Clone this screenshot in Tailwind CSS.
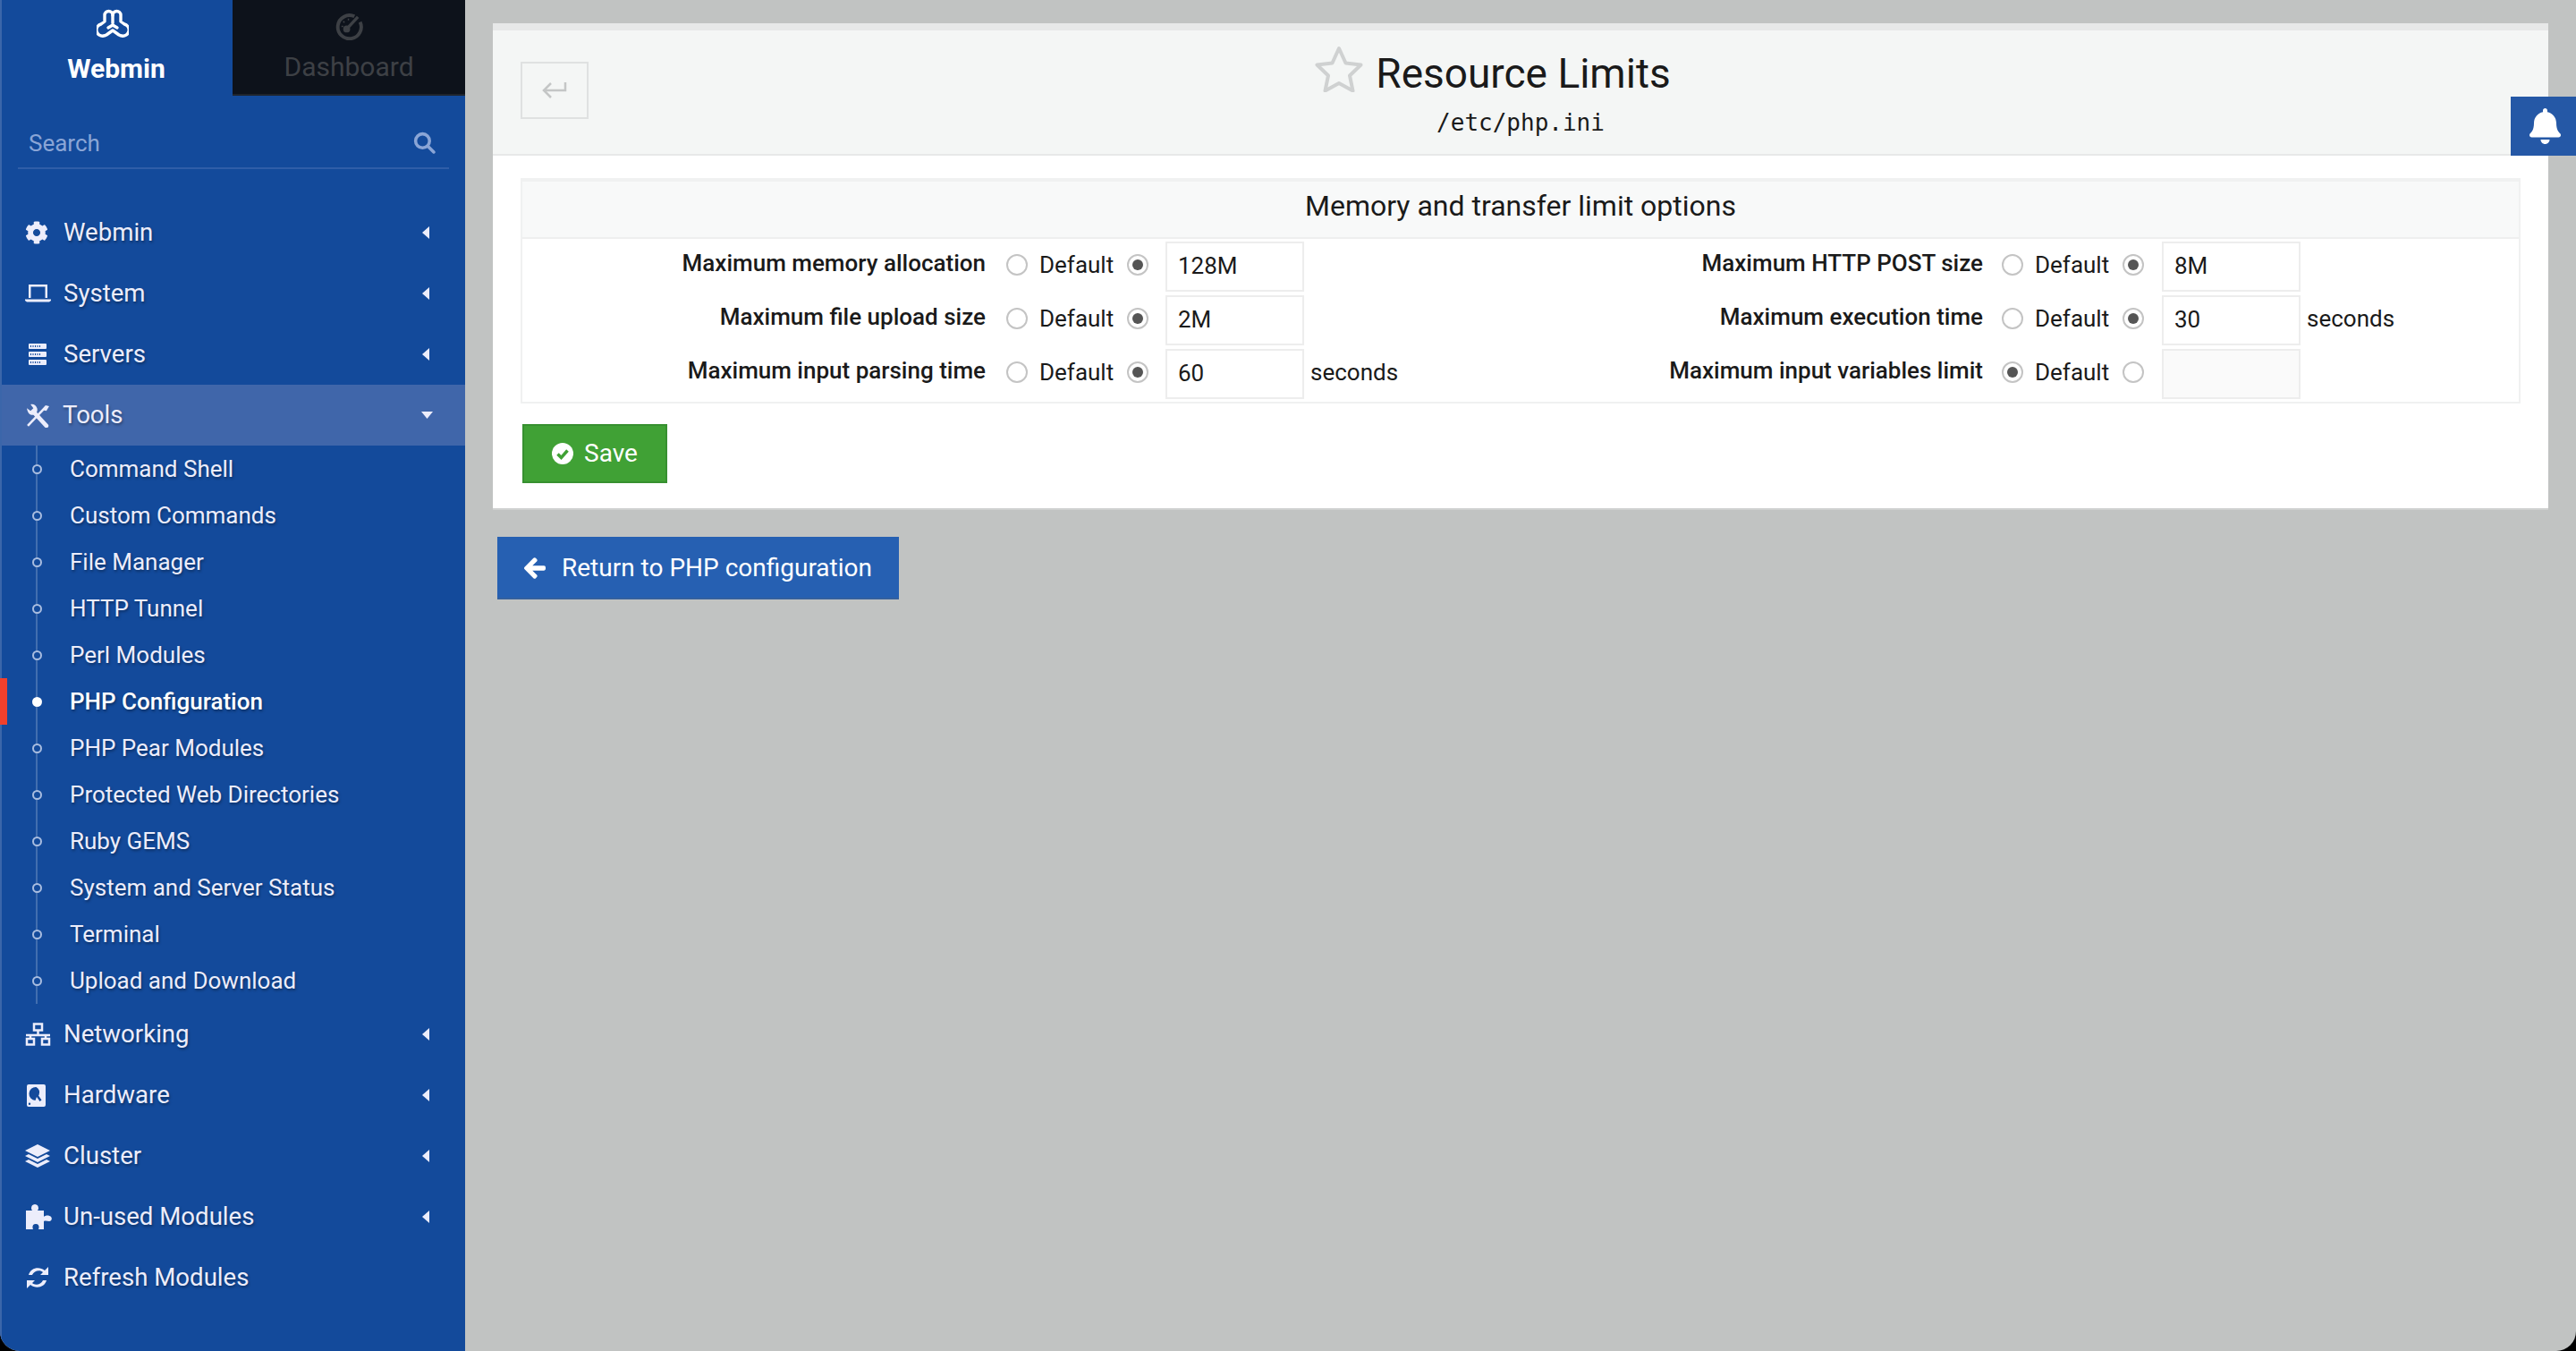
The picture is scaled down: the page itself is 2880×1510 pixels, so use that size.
<!DOCTYPE html>
<html>
<head>
<meta charset="utf-8">
<title>Resource Limits</title>
<script src="https://cdn.jsdelivr.net/npm/@tailwindcss/browser@4"></script>
</head>
<body class="bg-black m-0">
<div class="w-[2880px] h-[1510px] flex overflow-hidden rounded-b-[22px] bg-[#c1c3c2] font-['Roboto',sans-serif] relative">

  <!-- Sidebar -->
  <aside class="w-[520px] h-full shrink-0 flex flex-col bg-[#134a9b] border-l-2 border-[#3b66aa] relative">
    <div class="flex h-[107px] -ml-[2px]">
      <div class="w-[260px] flex flex-col items-center text-white">
        <svg class="mt-[10px] -ml-[9px]" width="36" height="34" viewBox="0 0 36 32" fill="none" stroke="#fff" stroke-width="3.4" stroke-linejoin="round" stroke-linecap="round"><path d="M9 13V6a4.500 4.500 0 0 1 9 0 4.500 4.500 0 0 1 9 0v7l4 3a6.500 6.500 0 0 1-3 13c-1 0-2-.5-3-1l-7-5-7 5c-1 .5-2 1-3 1a6.500 6.500 0 0 1-3-13z"/><path d="M18 6v9M13 20l5-3 5 3"/></svg>
        <span class="mt-[15px] text-[30px] leading-[36px] font-bold">Webmin</span>
      </div>
      <div class="w-[260px] flex flex-col items-center bg-[#0d121b] border-b-2 border-[#1f242c] text-[#3d4045]">
        <svg class="mt-[14px]" width="31" height="31" viewBox="0 0 32 32" fill="none" stroke="#3d4045"><path d="M22 4.500A13.500 13.500 0 1 0 28.500 11" stroke-width="4"/><path d="M13 19L26 5" stroke-width="3.500"/><circle cx="13" cy="19" r="4" fill="#3d4045" stroke="none"/><path d="M7 16h2M9 10l1.500 1.500M15 7v2" stroke-width="1.500"/></svg>
        <span class="mt-[12px] text-[30px] leading-[36px]">Dashboard</span>
      </div>
    </div>

    <div class="mx-[18px] mt-[30px] h-[52px] border-b-2 border-[#2f5ea8] flex items-center justify-between pl-[12px] pr-[15px] pb-[5px] text-[#8aa5d6]">
      <span class="text-[26px] leading-[30px]">Search</span>
      <svg width="25" height="25" viewBox="0 0 24 24" fill="none" stroke="#8aa5d6" stroke-width="3.400" stroke-linecap="round"><circle cx="10" cy="10" r="7.500"/><path d="M16 16l6 6"/></svg>
    </div>

    <nav class="mt-[36px] text-[#ecedfb] text-[27.6px] [text-shadow:1px_2px_3px_rgba(0,0,0,.35)]">
      <div class="h-[68px] flex items-center pl-[26px] pr-[40px] pt-[1px]">
        <svg class="w-[26px] h-[26px] mr-[17px]" viewBox="0 0 512 512" fill="#ecedfb"><path d="M487.4 315.7l-42.6-24.6c4.3-23.2 4.3-47 0-70.2l42.6-24.6c4.9-2.8 7.1-8.6 5.5-14-11.1-35.6-30-67.8-54.7-94.6-3.8-4.1-10-5.1-14.8-2.3L380.8 110c-17.9-15.4-38.5-27.3-60.8-35.1V25.8c0-5.6-3.9-10.5-9.4-11.7-36.7-8.2-74.3-7.8-109.2 0-5.5 1.2-9.4 6.1-9.4 11.7V75c-22.2 7.9-42.8 19.8-60.8 35.1L88.7 85.5c-4.9-2.8-11-1.9-14.8 2.3-24.7 26.7-43.6 58.9-54.7 94.6-1.7 5.4.6 11.2 5.500 14L67.3 221c-4.3 23.2-4.3 47 0 70.2l-42.6 24.6c-4.9 2.8-7.1 8.6-5.500 14 11.1 35.6 30 67.8 54.7 94.6 3.8 4.1 10 5.1 14.8 2.3l42.6-24.6c17.9 15.4 38.5 27.3 60.8 35.1v49.2c0 5.6 3.9 10.5 9.4 11.7 36.7 8.2 74.3 7.8 109.2 0 5.500-1.2 9.4-6.1 9.4-11.7v-49.2c22.2-7.9 42.8-19.8 60.8-35.1l42.6 24.6c4.9 2.8 11 1.9 14.8-2.3 24.7-26.7 43.6-58.9 54.7-94.6 1.500-5.500-.7-11.3-5.6-14.1zM256 336c-44.1 0-80-35.9-80-80s35.9-80 80-80 80 35.9 80 80-35.9 80-80 80z"/></svg>
        <span class="flex-1">Webmin</span>
        <svg width="8" height="14" viewBox="0 0 8 14" fill="#ecedfb"><path d="M8 0v14L0 7z"/></svg>
      </div>
      <div class="h-[68px] flex items-center pl-[26px] pr-[40px] pt-[1px]">
        <svg class="w-[29px] h-[22px] mr-[14px]" viewBox="0 0 29 22" fill="#ecedfb"><path d="M4 1h21v15h-2.500V3.500H6.500V16H4z"/><path d="M0 17.500h29v1.500l-2 1.500H2L0 19z"/></svg>
        <span class="flex-1">System</span>
        <svg width="8" height="14" viewBox="0 0 8 14" fill="#ecedfb"><path d="M8 0v14L0 7z"/></svg>
      </div>
      <div class="h-[69px] flex items-center pl-[30px] pr-[40px]">
        <svg class="w-[20px] h-[24px] mr-[19px]" viewBox="0 0 20 24" fill="#ecedfb"><path fill-rule="evenodd" d="M1 0h18a1 1 0 0 1 1 1v4a1 1 0 0 1-1 1H1a1 1 0 0 1-1-1V1a1 1 0 0 1 1-1zm1 2v2h1V2zm2.500 0v2h1V2zm2.500 0v2h1V2zm2.500 0v2h1V2zm2.500 0v2h1V2zM1 9h18a1 1 0 0 1 1 1v4a1 1 0 0 1-1 1H1a1 1 0 0 1-1-1v-4a1 1 0 0 1 1-1zm1 2v2h1v-2zm2.500 0v2h1v-2zm2.500 0v2h1v-2zm2.500 0v2h1v-2zm2.500 0v2h1v-2zM1 18h18a1 1 0 0 1 1 1v4a1 1 0 0 1-1 1H1a1 1 0 0 1-1-1v-4a1 1 0 0 1 1-1zm1 2v2h1v-2zm2.500 0v2h1v-2zm2.500 0v2h1v-2zm2.500 0v2h1v-2zm2.500 0v2h1v-2z"/></svg>
        <span class="flex-1">Servers</span>
        <svg width="8" height="14" viewBox="0 0 8 14" fill="#ecedfb"><path d="M8 0v14L0 7z"/></svg>
      </div>
      <div class="h-[68px] flex items-center pl-[27px] pr-[36px] bg-[#4066aa]">
        <svg class="w-[27px] h-[27px] mr-[14px]" viewBox="0 0 26 26" fill="none" stroke="#ecedfb"><path d="M2 24L21 4" stroke-width="2.500"/><path d="M18 7l3-5 4 1-3 5z" fill="#ecedfb" stroke="none"/><path d="M10 11L22 24" stroke-width="4.500" stroke-linecap="round"/><path d="M1 5l4 3 3-3-3-4c3-1 6 1 7 4s-1 6-3 7c-3 1-7 0-8-7z" fill="#ecedfb" stroke="none"/></svg>
        <span class="flex-1">Tools</span>
        <svg width="13" height="8" viewBox="0 0 13 8" fill="#ecedfb"><path d="M0 0h13L6.500 8z"/></svg>
      </div>

      <div class="relative h-[624px] text-[26px] leading-[52px]">
        <div class="absolute left-[38px] top-0 bottom-0 w-[2px] bg-white/20"></div>
        <div class="absolute -left-[2px] top-[260px] w-[8px] h-[52px] bg-[#f0402c]"></div>
        <div class="h-[52px] flex items-center pl-[34px]"><i class="w-[11px] h-[11px] rounded-full border-2 border-[#a9bde0] bg-[#134a9b] mr-[31px] relative"></i>Command Shell</div>
        <div class="h-[52px] flex items-center pl-[34px]"><i class="w-[11px] h-[11px] rounded-full border-2 border-[#a9bde0] bg-[#134a9b] mr-[31px] relative"></i>Custom Commands</div>
        <div class="h-[52px] flex items-center pl-[34px]"><i class="w-[11px] h-[11px] rounded-full border-2 border-[#a9bde0] bg-[#134a9b] mr-[31px] relative"></i>File Manager</div>
        <div class="h-[52px] flex items-center pl-[34px]"><i class="w-[11px] h-[11px] rounded-full border-2 border-[#a9bde0] bg-[#134a9b] mr-[31px] relative"></i>HTTP Tunnel</div>
        <div class="h-[52px] flex items-center pl-[34px]"><i class="w-[11px] h-[11px] rounded-full border-2 border-[#a9bde0] bg-[#134a9b] mr-[31px] relative"></i>Perl Modules</div>
        <div class="h-[52px] flex items-center pl-[34px] font-medium text-white"><i class="w-[11px] h-[11px] rounded-full bg-white mr-[31px] relative"></i>PHP Configuration</div>
        <div class="h-[52px] flex items-center pl-[34px]"><i class="w-[11px] h-[11px] rounded-full border-2 border-[#a9bde0] bg-[#134a9b] mr-[31px] relative"></i>PHP Pear Modules</div>
        <div class="h-[52px] flex items-center pl-[34px]"><i class="w-[11px] h-[11px] rounded-full border-2 border-[#a9bde0] bg-[#134a9b] mr-[31px] relative"></i>Protected Web Directories</div>
        <div class="h-[52px] flex items-center pl-[34px]"><i class="w-[11px] h-[11px] rounded-full border-2 border-[#a9bde0] bg-[#134a9b] mr-[31px] relative"></i>Ruby GEMS</div>
        <div class="h-[52px] flex items-center pl-[34px]"><i class="w-[11px] h-[11px] rounded-full border-2 border-[#a9bde0] bg-[#134a9b] mr-[31px] relative"></i>System and Server Status</div>
        <div class="h-[52px] flex items-center pl-[34px]"><i class="w-[11px] h-[11px] rounded-full border-2 border-[#a9bde0] bg-[#134a9b] mr-[31px] relative"></i>Terminal</div>
        <div class="h-[52px] flex items-center pl-[34px]"><i class="w-[11px] h-[11px] rounded-full border-2 border-[#a9bde0] bg-[#134a9b] mr-[31px] relative"></i>Upload and Download</div>
      </div>

      <div class="h-[68px] flex items-center pl-[26px] pr-[40px]">
        <svg class="w-[29px] h-[26px] mr-[14px]" viewBox="0 0 29 26" fill="none" stroke="#ecedfb" stroke-width="2.500"><rect x="10" y="1.500" width="9" height="7"/><path d="M14.500 8.500v5M1 14h27M6 14v4M23 14v4"/><rect x="2" y="18" width="8" height="6.500"/><rect x="19" y="18" width="8" height="6.500"/></svg>
        <span class="flex-1">Networking</span>
        <svg width="8" height="14" viewBox="0 0 8 14" fill="#ecedfb"><path d="M8 0v14L0 7z"/></svg>
      </div>
      <div class="h-[68px] flex items-center pl-[28px] pr-[40px]">
        <svg class="w-[21px] h-[25px] mr-[20px]" viewBox="0 0 21 25" fill="#ecedfb"><path fill-rule="evenodd" d="M2 0h17a2 2 0 0 1 2 2v21a2 2 0 0 1-2 2H2a2 2 0 0 1-2-2V2a2 2 0 0 1 2-2zm8.500 3a7.500 7.500 0 0 0-1 15l1.500-4 3.500 5 2-1.500-3.500-5 .5-.5a7.500 7.500 0 0 0-3-9zM3 20.500a1.200 1.200 0 1 0 0 2.400 1.200 1.200 0 0 0 0-2.400z"/></svg>
        <span class="flex-1">Hardware</span>
        <svg width="8" height="14" viewBox="0 0 8 14" fill="#ecedfb"><path d="M8 0v14L0 7z"/></svg>
      </div>
      <div class="h-[68px] flex items-center pl-[26px] pr-[40px]">
        <svg class="w-[28px] h-[27px] mr-[15px]" viewBox="0 0 28 27" fill="#ecedfb"><path d="M14 0l14 7-14 7L0 7z"/><path d="M4 11l10 5 10-5 4 2-14 7L0 13z"/><path d="M4 17l10 5 10-5 4 2-14 7L0 19z"/></svg>
        <span class="flex-1">Cluster</span>
        <svg width="8" height="14" viewBox="0 0 8 14" fill="#ecedfb"><path d="M8 0v14L0 7z"/></svg>
      </div>
      <div class="h-[68px] flex items-center pl-[27px] pr-[40px]">
        <svg class="w-[29px] h-[28px] mr-[13px]" viewBox="0 0 29 28" fill="#ecedfb"><path d="M0 7h7C5 5 6 0 10 0s5 5 3 7h7v7c2-2 6-2 8 0 2 2 0 5-2 5-2 0-4-1-6 0v9h-6c1-2 1-6-3-6s-4 4-3 6H0z"/></svg>
        <span class="flex-1">Un-used Modules</span>
        <svg width="8" height="14" viewBox="0 0 8 14" fill="#ecedfb"><path d="M8 0v14L0 7z"/></svg>
      </div>
      <div class="h-[68px] flex items-center pl-[28px] pr-[40px]">
        <svg class="w-[24px] h-[24px] mr-[17px]" viewBox="0 0 24 24" fill="#ecedfb"><path d="M24 0v9h-9l3-3c-3-3-10-2-12 3H2C4 1 14-1 20 4z"/><path d="M0 24v-9h9l-3 3c3 3 10 2 12-3h4c-2 8-12 10-18 5z"/></svg>
        <span class="flex-1">Refresh Modules</span>
      </div>
    </nav>
  </aside>

  <!-- Main -->
  <main class="flex-1 min-w-0 pt-[26px] pl-[31px] pr-[31px]">
    <section class="h-[544px] bg-white border-b-2 border-[#cfd1d0] flex flex-col">
      <div class="h-[148px] shrink-0 bg-[#f4f6f5] border-t-[8px] border-b-2 border-[#e7e8e8] relative flex flex-col items-center">
        <div class="absolute left-[31px] top-[35px] w-[76px] h-[64px] border-2 border-[#dfe1e1] flex items-center justify-center">
          <svg width="28" height="20" viewBox="0 0 28 20" fill="none" stroke="#c4c6c6" stroke-width="2.500"><path d="M26 1v9H3M10 2L2 10l8 8"/></svg>
        </div>
        <div class="flex items-center mt-[8px] h-[80px] text-[#1a1a1a] ml-[6px]">
          <h1 class="relative text-[46px] leading-[56px] font-normal">
            <svg class="absolute -left-[68px] -top-[3px]" width="54" height="52" viewBox="0 0 54 52" fill="none" stroke="#cfd1d1" stroke-width="4" stroke-linejoin="round"><path d="M27 3l7.500 16.500 17 2-12.500 12 3.500 17L27 42l-15.500 8.500 3.500-17L2.500 21.500l17-2z"/></svg>
            Resource Limits
          </h1>
        </div>
        <div class="font-['DejaVu_Sans_Mono',monospace] text-[26px] leading-[30px] text-[#1a1a1a]">/etc/php.ini</div>
      </div>

      <div class="mx-[31px] mt-[25px] h-[252px] border-x-2 border-b-2 border-t-[4px] border-[#f0f1f1] flex flex-col">
        <div class="h-[64px] shrink-0 bg-[#f8f9f9] border-b-2 border-[#eeefef] flex items-center justify-center pb-[8px] text-[32px] text-[#1a1a1a]">Memory and transfer limit options</div>
        <div class="flex flex-col gap-[4px] pt-[3px] text-[26px] text-[#1a1a1a]">

          <div class="h-[56px] flex">
            <div class="w-[1116px] flex items-center pb-[4px]">
              <label class="w-[518px] text-right font-medium -mt-[3px]">Maximum memory allocation</label>
              <span class="ml-[23px] w-6 h-6 rounded-full border-2 border-[#c4c4c4] bg-white"></span>
              <span class="ml-[13px] w-[83px]">Default</span>
              <span class="ml-[15px] w-6 h-6 rounded-full border-2 border-[#c4c4c4] bg-white flex items-center justify-center"><i class="w-[12px] h-[12px] rounded-full bg-[#555]"></i></span>
              <div class="ml-[19px] self-start w-[155px] h-[56px] border-2 border-[#ededed] flex items-center pl-[12px] pb-[2px]">128M</div>
            </div>
            <div class="flex-1 flex items-center pb-[4px]">
              <label class="w-[517px] text-right font-medium -mt-[3px]">Maximum HTTP POST size</label>
              <span class="ml-[21px] w-6 h-6 rounded-full border-2 border-[#c4c4c4] bg-white"></span>
              <span class="ml-[13px] w-[83px]">Default</span>
              <span class="ml-[15px] w-6 h-6 rounded-full border-2 border-[#c4c4c4] bg-white flex items-center justify-center"><i class="w-[12px] h-[12px] rounded-full bg-[#555]"></i></span>
              <div class="ml-[20px] self-start w-[155px] h-[56px] border-2 border-[#ededed] flex items-center pl-[12px] pb-[2px]">8M</div>
            </div>
          </div>

          <div class="h-[56px] flex">
            <div class="w-[1116px] flex items-center pb-[4px]">
              <label class="w-[518px] text-right font-medium -mt-[3px]">Maximum file upload size</label>
              <span class="ml-[23px] w-6 h-6 rounded-full border-2 border-[#c4c4c4] bg-white"></span>
              <span class="ml-[13px] w-[83px]">Default</span>
              <span class="ml-[15px] w-6 h-6 rounded-full border-2 border-[#c4c4c4] bg-white flex items-center justify-center"><i class="w-[12px] h-[12px] rounded-full bg-[#555]"></i></span>
              <div class="ml-[19px] self-start w-[155px] h-[56px] border-2 border-[#ededed] flex items-center pl-[12px] pb-[2px]">2M</div>
            </div>
            <div class="flex-1 flex items-center pb-[4px]">
              <label class="w-[517px] text-right font-medium -mt-[3px]">Maximum execution time</label>
              <span class="ml-[21px] w-6 h-6 rounded-full border-2 border-[#c4c4c4] bg-white"></span>
              <span class="ml-[13px] w-[83px]">Default</span>
              <span class="ml-[15px] w-6 h-6 rounded-full border-2 border-[#c4c4c4] bg-white flex items-center justify-center"><i class="w-[12px] h-[12px] rounded-full bg-[#555]"></i></span>
              <div class="ml-[20px] self-start w-[155px] h-[56px] border-2 border-[#ededed] flex items-center pl-[12px] pb-[2px]">30</div>
              <span class="ml-[7px]">seconds</span>
            </div>
          </div>

          <div class="h-[56px] flex">
            <div class="w-[1116px] flex items-center pb-[4px]">
              <label class="w-[518px] text-right font-medium -mt-[3px]">Maximum input parsing time</label>
              <span class="ml-[23px] w-6 h-6 rounded-full border-2 border-[#c4c4c4] bg-white"></span>
              <span class="ml-[13px] w-[83px]">Default</span>
              <span class="ml-[15px] w-6 h-6 rounded-full border-2 border-[#c4c4c4] bg-white flex items-center justify-center"><i class="w-[12px] h-[12px] rounded-full bg-[#555]"></i></span>
              <div class="ml-[19px] self-start w-[155px] h-[56px] border-2 border-[#ededed] flex items-center pl-[12px] pb-[2px]">60</div>
              <span class="ml-[7px]">seconds</span>
            </div>
            <div class="flex-1 flex items-center pb-[4px]">
              <label class="w-[517px] text-right font-medium -mt-[3px]">Maximum input variables limit</label>
              <span class="ml-[21px] w-6 h-6 rounded-full border-2 border-[#c4c4c4] bg-white flex items-center justify-center"><i class="w-[12px] h-[12px] rounded-full bg-[#555]"></i></span>
              <span class="ml-[13px] w-[83px]">Default</span>
              <span class="ml-[15px] w-6 h-6 rounded-full border-2 border-[#c4c4c4] bg-white"></span>
              <div class="ml-[20px] self-start w-[155px] h-[56px] border-2 border-[#ededed] bg-[#fafafa]"></div>
            </div>
          </div>
        </div>
      </div>

      <div class="ml-[33px] mt-[23px] w-[162px] h-[66px] bg-[#40a135] border-2 border-[#379030] flex items-center justify-center text-white text-[28px]">
        <svg class="mr-[12px]" width="24" height="24" viewBox="0 0 24 24"><circle cx="12" cy="12" r="12" fill="#fff"/><path d="M6.500 12.500l4 4 7-8" fill="none" stroke="#40a135" stroke-width="3.500"/></svg>
        Save
      </div>
    </section>

    <div class="mt-[30px] ml-[5px] w-[449px] h-[70px] bg-[#2660b2] border-b-2 border-[#34609e] flex items-center pl-[30px] pt-[1px] text-white text-[28px]">
      <svg class="mr-[18px]" width="24" height="26" viewBox="0 0 448 512" fill="#fff" stroke="#fff" stroke-width="24"><path d="M257.5 445.1l-22.2 22.2c-9.4 9.4-24.6 9.4-33.9 0L7 273c-9.4-9.4-9.4-24.6 0-33.9L201.4 44.7c9.4-9.4 24.6-9.4 33.9 0l22.2 22.2c9.5 9.5 9.3 25-.4 34.3L136.6 216H424c13.3 0 24 10.7 24 24v32c0 13.3-10.7 24-24 24H136.6l120.5 114.8c9.8 9.3 10 24.8.4 34.3z"/></svg>
      Return to PHP configuration
    </div>
  </main>

  <!-- Notification bell overlay -->
  <div class="absolute right-0 top-[108px] w-[73px] h-[66px] bg-[#2558a6] flex items-center justify-center pl-[4px]">
    <svg width="35" height="40" viewBox="0 0 448 512" fill="#fff"><path d="M224 512c35.32 0 63.97-28.65 63.97-64H160.03c0 35.35 28.65 64 63.97 64zm215.39-149.71c-19.32-20.76-55.47-51.99-55.47-154.29 0-77.7-54.48-139.9-127.94-155.16V32c0-17.67-14.32-32-31.98-32s-31.98 14.33-31.98 32v20.84C118.56 68.1 64.08 130.3 64.08 208c0 102.3-36.15 133.53-55.47 154.29-6 6.45-8.66 14.16-8.61 21.71.11 16.4 12.98 32 32.1 32h383.8c19.12 0 32-15.6 32.1-32 .05-7.55-2.61-15.26-8.61-21.71z"/></svg>
  </div>
</div>
</body>
</html>
